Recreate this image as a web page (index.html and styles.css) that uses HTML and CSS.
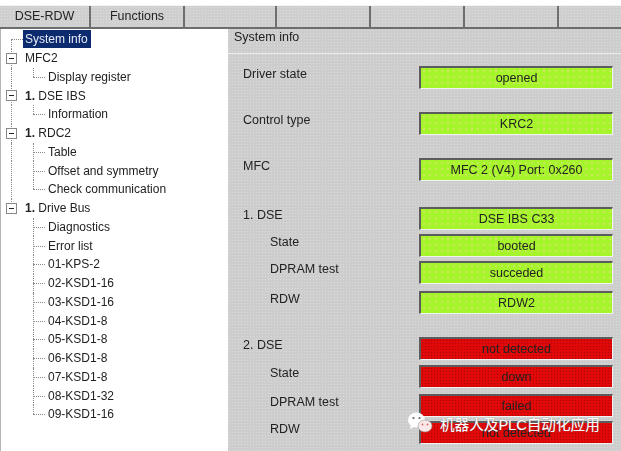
FILE: index.html
```html
<!DOCTYPE html>
<html lang="en">
<head>
	<meta charset="UTF-8">
	<title>DSE-RDW System info</title>
	<link rel="stylesheet" href="styles.css">
</head>
<body>
	<div class="app">
		<div class="tabs">
			<div class="tab first">DSE-RDW</div>
			<div class="tab">Functions</div>
			<div class="tab"></div>
			<div class="tab"></div>
			<div class="tab"></div>
			<div class="tab"></div>
			<div class="tab last"></div>
		</div>
		<div class="main">
			<ul class="tree">
				<li class="node"><span class="cell start"></span><span class="label selected">System info</span></li>
				<li class="node"><span class="cell box pipe"><svg class="toggle" width="11" height="11"><rect x=".5" y=".5" width="10" height="10" fill="#fff" stroke="#888"/><path d="M3 5.5h5" stroke="#222"/></svg></span><span class="label">MFC2</span></li>
				<li class="node"><span class="cell pipe"></span><span class="cell elbow"></span><span class="label">Display register</span></li>
				<li class="node"><span class="cell box pipe"><svg class="toggle" width="11" height="11"><rect x=".5" y=".5" width="10" height="10" fill="#fff" stroke="#888"/><path d="M3 5.5h5" stroke="#222"/></svg></span><span class="label"><b>1.</b> DSE IBS</span></li>
				<li class="node"><span class="cell pipe"></span><span class="cell elbow"></span><span class="label">Information</span></li>
				<li class="node"><span class="cell box pipe"><svg class="toggle" width="11" height="11"><rect x=".5" y=".5" width="10" height="10" fill="#fff" stroke="#888"/><path d="M3 5.5h5" stroke="#222"/></svg></span><span class="label"><b>1.</b> RDC2</span></li>
				<li class="node"><span class="cell pipe"></span><span class="cell tee"></span><span class="label">Table</span></li>
				<li class="node"><span class="cell pipe"></span><span class="cell tee"></span><span class="label">Offset and symmetry</span></li>
				<li class="node"><span class="cell pipe"></span><span class="cell elbow"></span><span class="label">Check communication</span></li>
				<li class="node"><span class="cell box end"><svg class="toggle" width="11" height="11"><rect x=".5" y=".5" width="10" height="10" fill="#fff" stroke="#888"/><path d="M3 5.5h5" stroke="#222"/></svg></span><span class="label"><b>1.</b> Drive Bus</span></li>
				<li class="node"><span class="cell"></span><span class="cell tee"></span><span class="label">Diagnostics</span></li>
				<li class="node"><span class="cell"></span><span class="cell tee"></span><span class="label">Error list</span></li>
				<li class="node"><span class="cell"></span><span class="cell tee"></span><span class="label">01-KPS-2</span></li>
				<li class="node"><span class="cell"></span><span class="cell tee"></span><span class="label">02-KSD1-16</span></li>
				<li class="node"><span class="cell"></span><span class="cell tee"></span><span class="label">03-KSD1-16</span></li>
				<li class="node"><span class="cell"></span><span class="cell tee"></span><span class="label">04-KSD1-8</span></li>
				<li class="node"><span class="cell"></span><span class="cell tee"></span><span class="label">05-KSD1-8</span></li>
				<li class="node"><span class="cell"></span><span class="cell tee"></span><span class="label">06-KSD1-8</span></li>
				<li class="node"><span class="cell"></span><span class="cell tee"></span><span class="label">07-KSD1-8</span></li>
				<li class="node"><span class="cell"></span><span class="cell tee"></span><span class="label">08-KSD1-32</span></li>
				<li class="node"><span class="cell"></span><span class="cell elbow"></span><span class="label">09-KSD1-16</span></li>
			</ul>
			<div class="panel">
				<div class="panel-title">System info</div>
				<div class="rows">
					<div class="row g12"><span class="name">Driver state</span><span class="value ok">opened</span></div>
					<div class="row g23"><span class="name">Control type</span><span class="value ok">KRC2</span></div>
					<div class="row g23"><span class="name">MFC</span><span class="value ok">MFC 2 (V4) Port: 0x260</span></div>
					<div class="row g26"><span class="name">1. DSE</span><span class="value ok">DSE IBS C33</span></div>
					<div class="row g4"><span class="name sub">State</span><span class="value ok">booted</span></div>
					<div class="row g4"><span class="name sub">DPRAM test</span><span class="value ok">succeded</span></div>
					<div class="row g7"><span class="name sub">RDW</span><span class="value ok">RDW2</span></div>
					<div class="row g23"><span class="name">2. DSE</span><span class="value bad">not detected</span></div>
					<div class="row g5"><span class="name sub">State</span><span class="value bad">down</span></div>
					<div class="row g6"><span class="name sub">DPRAM test</span><span class="value bad">failed</span></div>
					<div class="row g4"><span class="name sub">RDW</span><span class="value bad">not detected</span></div>
				</div>
			</div>
		</div>
	</div>

	<div class="watermark">
		<svg width="26" height="22" viewBox="0 0 26 22">
			<ellipse cx="9.5" cy="8" rx="8.5" ry="7.5" fill="#fff"/>
			<path d="M4 13l-1 4 5-2.500z" fill="#fff"/>
			<ellipse cx="18" cy="14" rx="7" ry="6" fill="#fbe9e9" stroke="#999" stroke-width=".6"/>
			<circle cx="6.500" cy="6" r="1.100" fill="#666"/>
			<circle cx="12.500" cy="6" r="1.100" fill="#666"/>
			<circle cx="15.500" cy="12.500" r=".9" fill="#c66"/>
			<circle cx="20.500" cy="12.500" r=".9" fill="#c66"/>
		</svg>
		<span>机器人及PLC自动化应用</span>
	</div>
</body>
</html>
```

FILE: styles.css
```css
html, body {
	margin: 0;
	padding: 0;
	background-color: #fff;
}

body {
	width: 621px;
	height: 451px;
	overflow: hidden;
	position: relative;
	font-family: "Liberation Sans", Arial, sans-serif;
	font-size: 12px;
	color: #222;
}

/* the source is a blurry scaled capture */
.app {
	height: 446px;
	padding-top: 5px;
	filter: blur(.6px);
}

.tabs {
	display: flex;
	height: 24px;
	box-sizing: border-box;
	background-color: #cfcfcf;
	background-image: radial-gradient(#dedede 30%, transparent 32%);
	background-size: 3px 3px;
	border-top: 1px solid #f4f4f4;
	border-bottom: 2px solid #6e6e6e;
}

.tab {
	width: 94px;
	flex: none;
	box-sizing: border-box;
	border-right: 2px solid #6e6e6e;
	line-height: 21px;
	text-align: center;
	font-size: 12.5px;
}

.tab.first {
	width: 91px;
}

.tab.last {
	flex: 1;
	border-right: 0;
}

.tab:nth-child(3) {
	width: 92px;
}

.main {
	display: flex;
	height: 422px;
}

.tree {
	width: 228px;
	flex: none;
	box-sizing: border-box;
	margin: 0;
	padding: 1px 0 0;
	list-style: none;
	background-color: #fff;
	border-left: 1px solid #b5b5b5;
}

.node {
	display: flex;
	align-items: center;
	height: 18.75px;
	white-space: nowrap;
	color: #222;
}

.cell {
	position: relative;
	width: 22px;
	height: 100%;
	flex: none;
}

.pipe::before, .tee::before, .elbow::before, .start::before, .box.end::before {
	content: "";
	position: absolute;
	left: 10px;
	top: 0;
	bottom: 0;
	border-left: 1px dotted #888;
}

.elbow::before, .box.end::before {
	bottom: 50%;
}

.start::before {
	top: 50%;
}

.tee::after, .elbow::after, .start::after {
	content: "";
	position: absolute;
	left: 10px;
	right: 0;
	top: 50%;
	border-top: 1px dotted #888;
}

.toggle {
	position: absolute;
	left: 5px;
	top: 4px;
}

.label {
	padding: 1px 2px;
	margin-left: 1px;
	font-size: 12px;
}

.box + .label {
	margin-left: 0;
}

.selected {
	margin-left: 0;
	padding: 2px 3px 2px 2px;
	background-color: #0c2a6e;
	color: #e8ecf6;
}

.panel {
	flex: 1;
	background-color: #cdcdcd;
	background-image: radial-gradient(#dcdcdc 30%, transparent 32%);
	background-size: 3px 3px;
}

.panel-title {
	height: 25px;
	box-sizing: border-box;
	padding: 1px 0 0 6px;
	line-height: 14px;
	font-size: 12.5px;
	border-bottom: 1px solid #ececec;
}

.rows {
	padding-right: 8px;
}

.row {
	display: flex;
	justify-content: space-between;
	height: 23px;
}

.g4 { margin-top: 4px; }
.g5 { margin-top: 5px; }
.g6 { margin-top: 6px; }
.g7 { margin-top: 7px; }
.g12 { margin-top: 12px; }
.g23 { margin-top: 23px; }
.g26 { margin-top: 26px; }

.name {
	margin-left: 15px;
	line-height: 16px;
	font-size: 12.5px;
}

.name.sub {
	margin-left: 42px;
}

.value {
	width: 194px;
	box-sizing: border-box;
	border-top: 2px solid #5c5c5c;
	border-left: 2px solid #5c5c5c;
	border-bottom: 1px solid #f2f2f2;
	border-right: 1px solid #f2f2f2;
	line-height: 20px;
	text-align: center;
	font-size: 12.5px;
}

.ok {
	background-color: #a6f52c;
	background-image: radial-gradient(#c8e85a 30%, transparent 32%);
	background-size: 6px 6px;
}

.bad {
	background-color: #e00808;
	background-image: radial-gradient(#a80808 30%, transparent 32%);
	background-size: 3px 3px;
}

.watermark {
	position: absolute;
	left: 407px;
	top: 412px;
	display: flex;
	align-items: center;
	gap: 7px;
	color: #fff;
	font-family: "Liberation Sans", "Noto Sans CJK SC", sans-serif;
	font-size: 14.6px;
	text-shadow: 0 0 1px #777;
}
```
